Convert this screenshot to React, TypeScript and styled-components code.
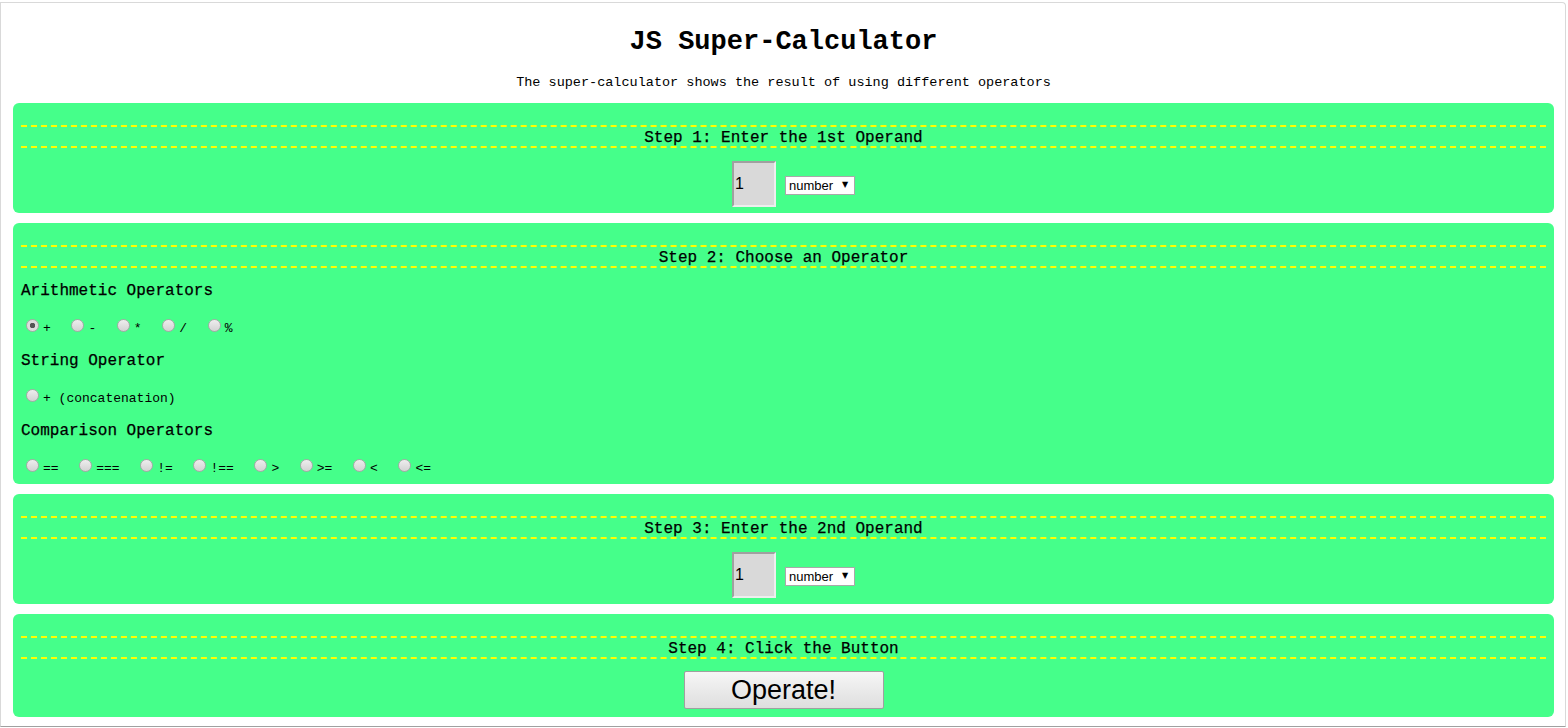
import React from "react";
import styled, { createGlobalStyle } from "styled-components";

const Global = createGlobalStyle`
  html, body { margin: 0; padding: 0; background: #ffffff; }
  body { font-family: "Liberation Mono", "Courier New", monospace; color: #000; }
  * { box-sizing: border-box; }
`;

const Frame = styled.div`
  margin-top: 2px;
  width: 1566px;
  border: 1px solid #d9d9d9;
  border-bottom: 1px solid #a0a0a0;
  border-top-right-radius: 4px;
  padding: 23px 11px 9px 12px;
  display: flex;
  flex-direction: column;
`;

const Title = styled.h1`
  margin: 0;
  font-family: "Liberation Mono", "Courier New", monospace;
  font-size: 27px;
  font-weight: bold;
  line-height: 32px;
  text-align: center;
`;

const Subtitle = styled.p`
  margin: 17px 0 12px;
  font-size: 13.5px;
  line-height: 16px;
  text-align: center;
`;

const Panel = styled.section`
  background: #45ff8a;
  border-radius: 6px;
  padding: 22px 8px 0;
  display: flex;
  flex-direction: column;
  & + & { margin-top: 10px; }
`;

const StepHeading = styled.h2`
  margin: 0;
  border-top: 2px dashed #ffff00;
  border-bottom: 2px dashed #ffff00;
  font-size: 16px;
  font-weight: normal;
  -webkit-text-stroke: 0.25px #000;
  line-height: 16px;
  padding-top: 3px;
  text-align: center;
`;

const OperandRow = styled.div`
  display: flex;
  justify-content: center;
  align-items: center;
  gap: 9px;
  padding: 13px 0 6px 20px;
`;

const NumberInput = styled.input`
  width: 44px;
  height: 46px;
  background: #d9d9d9;
  border-style: solid;
  border-width: 2px;
  border-color: #a0a0a0 #eeeeee #eeeeee #a0a0a0;
  font-family: "Liberation Sans", Arial, sans-serif;
  font-size: 16px;
  padding: 0 1px;
  margin: 0;
  color: #000;
  outline: none;
`;

const SelectBox = styled.div`
  display: flex;
  align-items: center;
  width: 70px;
  height: 19px;
  background: #fff;
  border: 1px solid #a9a9a9;
  margin-top: 2px;
`;

const SelectNative = styled.select`
  appearance: none;
  -webkit-appearance: none;
  border: none;
  background: transparent;
  font-family: "Liberation Sans", Arial, sans-serif;
  font-size: 13px;
  padding: 0 0 0 3px;
  margin: 0;
  width: 56px;
  height: 17px;
  color: #000;
  outline: none;
`;

const Arrow = styled.span`
  font-family: "DejaVu Sans", sans-serif;
  font-size: 8px;
  line-height: 1;
  color: #000;
`;

const OperatorBody = styled.div`
  display: flex;
  flex-direction: column;
  padding-top: 6px;
`;

const GroupTitle = styled.h3`
  margin: 0;
  font-size: 16px;
  font-weight: normal;
  -webkit-text-stroke: 0.25px #000;
  line-height: 35px;
  height: 35px;
`;

const RadioRow = styled.div`
  display: flex;
  align-items: center;
  height: 35px;
  font-size: 13px;
`;

const RadioLabel = styled.label`
  display: inline-flex;
  align-items: center;
  padding-right: 15.6px;
  white-space: pre;
  line-height: 16px;
`;

const RadioText = styled.span`
  padding-top: 5px;
`;

const Radio = styled.input.attrs({ type: "radio" })`
  appearance: none;
  -webkit-appearance: none;
  width: 13px;
  height: 13px;
  margin: 0 4px 2px 5px;
  border-radius: 50%;
  border: 1px solid #a8a8a8;
  background: linear-gradient(#eeeeee, #d2d2d2);
  &:checked {
    background: radial-gradient(circle, #555555 0 2.5px, #dddddd 3px);
  }
`;

const ButtonRow = styled.div`
  display: flex;
  justify-content: center;
  padding: 12px 0 8px;
`;

const OperateButton = styled.button`
  width: 200px;
  height: 38px;
  font-family: "Liberation Sans", Arial, sans-serif;
  font-size: 27px;
  color: #000;
  background: linear-gradient(#f6f6f6, #dedede);
  border: 1px solid #a0a0a0;
  border-radius: 2px;
  padding: 0;
  line-height: 36px;
`;

function OperandPanel({ step, label }: { step: number; label: string }) {
  return (
    <Panel>
      <StepHeading>{`Step ${step}: ${label}`}</StepHeading>
      <OperandRow>
        <NumberInput defaultValue="1" />
        <SelectBox>
          <SelectNative defaultValue="number">
            <option value="number">number</option>
            <option value="string">string</option>
          </SelectNative>
          <Arrow>▼</Arrow>
        </SelectBox>
      </OperandRow>
    </Panel>
  );
}

const arithmetic = ["+", "-", "*", "/", "%"];
const comparison = ["==", "===", "!=", "!==", ">", ">=", "<", "<="];

export default function App() {
  return (
    <>
      <Global />
      <Frame>
        <Title>JS Super-Calculator</Title>
        <Subtitle>The super-calculator shows the result of using different operators</Subtitle>
        <OperandPanel step={1} label="Enter the 1st Operand" />
        <Panel>
          <StepHeading>Step 2: Choose an Operator</StepHeading>
          <OperatorBody>
            <GroupTitle>Arithmetic Operators</GroupTitle>
            <RadioRow>
              {arithmetic.map((op, i) => (
                <RadioLabel key={op}>
                  <Radio name="op" defaultChecked={i === 0} />
                  <RadioText>{op}</RadioText>
                </RadioLabel>
              ))}
            </RadioRow>
            <GroupTitle>String Operator</GroupTitle>
            <RadioRow>
              <RadioLabel>
                <Radio name="op" />
                <RadioText>+ (concatenation)</RadioText>
              </RadioLabel>
            </RadioRow>
            <GroupTitle>Comparison Operators</GroupTitle>
            <RadioRow>
              {comparison.map((op) => (
                <RadioLabel key={op}>
                  <Radio name="op" />
                  <RadioText>{op}</RadioText>
                </RadioLabel>
              ))}
            </RadioRow>
          </OperatorBody>
        </Panel>
        <OperandPanel step={3} label="Enter the 2nd Operand" />
        <Panel>
          <StepHeading>Step 4: Click the Button</StepHeading>
          <ButtonRow>
            <OperateButton>Operate!</OperateButton>
          </ButtonRow>
        </Panel>
      </Frame>
    </>
  );
}
